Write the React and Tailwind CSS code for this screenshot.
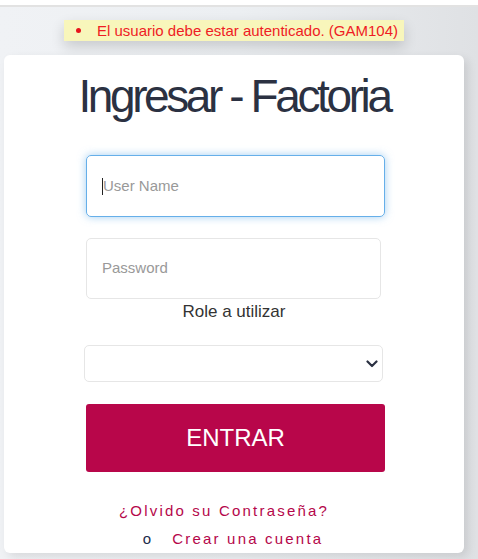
import React from 'react';

export default function App() {
  return (
    <div className="w-[478px] h-[559px] overflow-hidden bg-white font-['Liberation_Sans',Arial,sans-serif]">
      <div className="h-[5px] bg-white" />
      <div className="h-[554px] border-t-2 border-[#e2e2e2] bg-gradient-to-r from-[#f0f2f5] via-[#eceff2] to-[#dfe1e4] flex flex-col">
        <div className="mt-[13px] ml-[64px] w-[340px] h-[21px] bg-[#f8f6bb] shadow-[0_6px_14px_rgba(0,0,0,0.16)] flex items-center">
          <span className="ml-[12px] w-[5px] h-[5px] rounded-full bg-[#e8141c]" />
          <span className="ml-[16px] text-[15px] leading-none text-[#ef1c24]">
            El usuario debe estar autenticado. (GAM104)
          </span>
        </div>

        <div className="mt-[14px] ml-[4px] w-[460px] h-[498px] bg-white rounded-md shadow-[4px_4px_10px_rgba(0,0,0,0.10)] flex flex-col items-center pt-[18px]">
          <h1 className="text-[46px] leading-none tracking-[-3.4px] text-[#2b3142] font-normal">
            Ingresar - Factoria
          </h1>

          <div className="mt-[36px] w-[299px] ml-[3px] h-[62px] rounded-[5px] border border-[#66afe9] shadow-[0_0_8px_rgba(102,175,233,0.6)] flex items-center px-[15px]">
            <span className="w-px h-[17px] bg-[#222]" />
            <span className="text-[15px] text-[#999]">User Name</span>
          </div>

          <div className="mt-[21px] w-[295px] ml-[-1px] h-[61px] rounded-[5px] border border-[#e6e6e6] flex items-center px-[15px]">
            <span className="text-[15px] text-[#999]">Password</span>
          </div>

          <div className="mt-[3px] text-[17px] leading-[20px] text-[#333]">Role a utilizar</div>

          <div className="mt-[23px] w-[299px] ml-[-2px] h-[37px] rounded-[5px] border border-[#e6e6e6] flex items-center justify-end pr-[4px]">
            <svg width="12" height="8" viewBox="0 0 12 8" fill="none">
              <path d="M1.5 1.5 L6 6 L10.5 1.5" stroke="#2b3142" strokeWidth="2.2" strokeLinecap="round" strokeLinejoin="round" />
            </svg>
          </div>

          <div className="mt-[22px] w-[299px] ml-[3px] h-[68px] rounded-[3px] bg-[#b8064a] flex items-center justify-center">
            <span className="text-[24px] text-white">ENTRAR</span>
          </div>

          <div className="mt-[30px] mr-[20px] text-[15px] leading-[18px] tracking-[2.2px] text-[#b5064a]">
            ¿Olvido su Contraseña?
          </div>
          <div className="mt-[10px] ml-[-2px] text-[15px] leading-[18px] tracking-[2.2px] flex">
            <span className="text-[#1b2a4a] mr-[19px]">o</span>
            <span className="text-[#b5064a]">Crear una cuenta</span>
          </div>
        </div>
      </div>
    </div>
  );
}
